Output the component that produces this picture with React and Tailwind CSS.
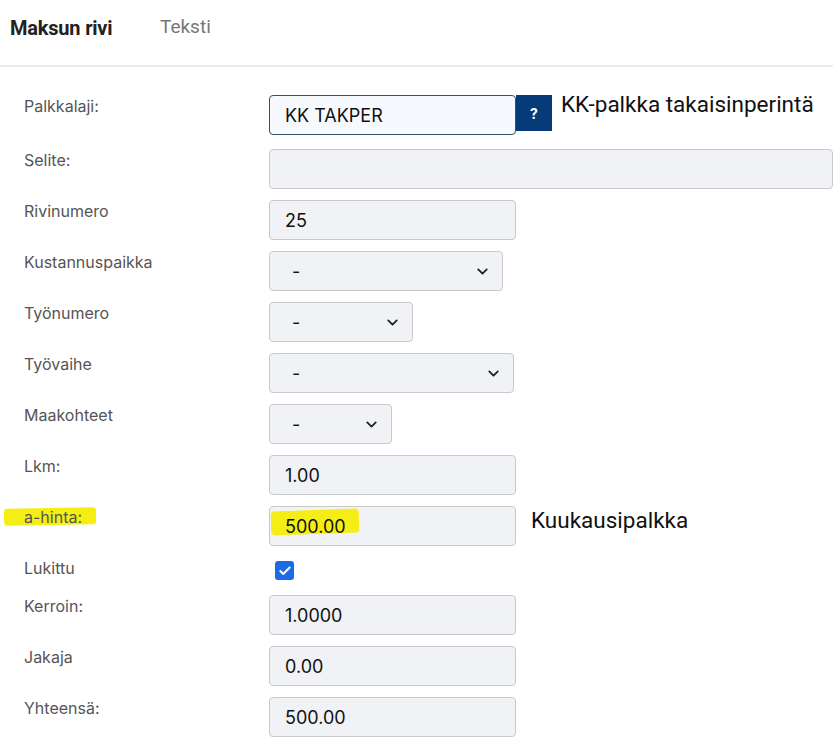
import React from 'react';
import { ChevronDown, Check } from 'lucide-react';

const labelCls = 'w-[245px] shrink-0 pt-[1px] text-[16px] leading-5 text-[#555]';
const inputCls =
  'h-[40px] rounded-[4px] border-[1.5px] border-[#c9c9cc] bg-[#f1f2f6] pl-[15px] flex items-center text-[18px] text-[#111]';

const Field = ({ label, value, width = 'w-[247px]', top = 'mt-[11px]' }) => (
  <div className={`flex items-start ${top}`}>
    <div className={labelCls}>{label}</div>
    <div className={`${inputCls} ${width}`}>{value}</div>
  </div>
);

const Select = ({ label, width }) => (
  <div className="flex items-start mt-[11px]">
    <div className={labelCls}>{label}</div>
    <div className={`${inputCls} ${width} justify-between pl-[22px] pr-[11px]`}>
      <span>-</span>
      <ChevronDown size={17} strokeWidth={2.6} className="text-[#222]" />
    </div>
  </div>
);

export default function App() {
  return (
    <div className="w-[833px] h-[741px] overflow-hidden bg-white" style={{ fontFamily: 'Inter, "Noto Sans", sans-serif' }}>
      <div className="h-[67px] flex items-start pt-[13px] pl-[10px] border-b-2 border-[#ececec]" style={{ fontFamily: 'Roboto, sans-serif' }}>
        <span className="w-[150px] text-[20px] font-bold text-[#222] tracking-[-0.2px]">Maksun rivi</span>
        <span className="text-[19px] text-[#777]">Teksti</span>
      </div>

      <div className="flex flex-col pl-[24px]">
        <div className="flex items-start mt-[28px]">
          <div className={labelCls}>Palkkalaji:</div>
          <div className="h-[40px] w-[247px] rounded-[4px] border-[1.5px] border-[#34506f] bg-[#f6faff] pl-[15px] flex items-center text-[18px] text-[#111]">
            KK TAKPER
          </div>
          <div className="h-[36px] w-[36px] bg-[#073a78] text-white font-bold text-[14px] flex items-center justify-center">?</div>
          <div className="ml-[9px] -mt-[7px] text-[22.5px] text-[#111]" style={{ fontFamily: 'Roboto, sans-serif' }}>
            KK-palkka takaisinperintä
          </div>
        </div>

        <Field label="Selite:" value="" width="w-[580px]" top="mt-[14px]" />
        <Field label="Rivinumero" value="25" />
        <Select label="Kustannuspaikka" width="w-[234px]" />
        <Select label="Työnumero" width="w-[144px]" />
        <Select label="Työvaihe" width="w-[245px]" />
        <Select label="Maakohteet" width="w-[123px]" />
        <Field label="Lkm:" value="1.00" />

        <div className="flex items-start mt-[11px]">
          <div className={`${labelCls} relative`}>
            <span className="absolute left-[-20px] top-[2px] h-[17px] w-[92px] bg-[#f4ee14] rounded-[3px] -rotate-1 blur-[0.5px]" />
            <span className="relative">a-hinta:</span>
          </div>
          <div className={`${inputCls} w-[247px] relative`}>
            <span className="absolute left-[1px] top-[3px] h-[24px] w-[88px] bg-[#f4ee14] rounded-[4px] rotate-[-2deg] blur-[0.5px]" />
            <span className="relative">500.00</span>
          </div>
          <div className="ml-[15px] -mt-[2px] text-[22.5px] text-[#111]" style={{ fontFamily: 'Roboto, sans-serif' }}>
            Kuukausipalkka
          </div>
        </div>

        <div className="flex items-start mt-[11px] h-[27px]">
          <div className={labelCls}>Lukittu</div>
          <div className="mt-[4px] ml-[6px] h-[19px] w-[19px] rounded-[3px] bg-[#1b6ae6] flex items-center justify-center">
            <Check size={14} strokeWidth={3.5} className="text-white" />
          </div>
        </div>

        <Field label="Kerroin:" value="1.0000" />
        <Field label="Jakaja" value="0.00" />
        <Field label="Yhteensä:" value="500.00" />
      </div>
    </div>
  );
}
